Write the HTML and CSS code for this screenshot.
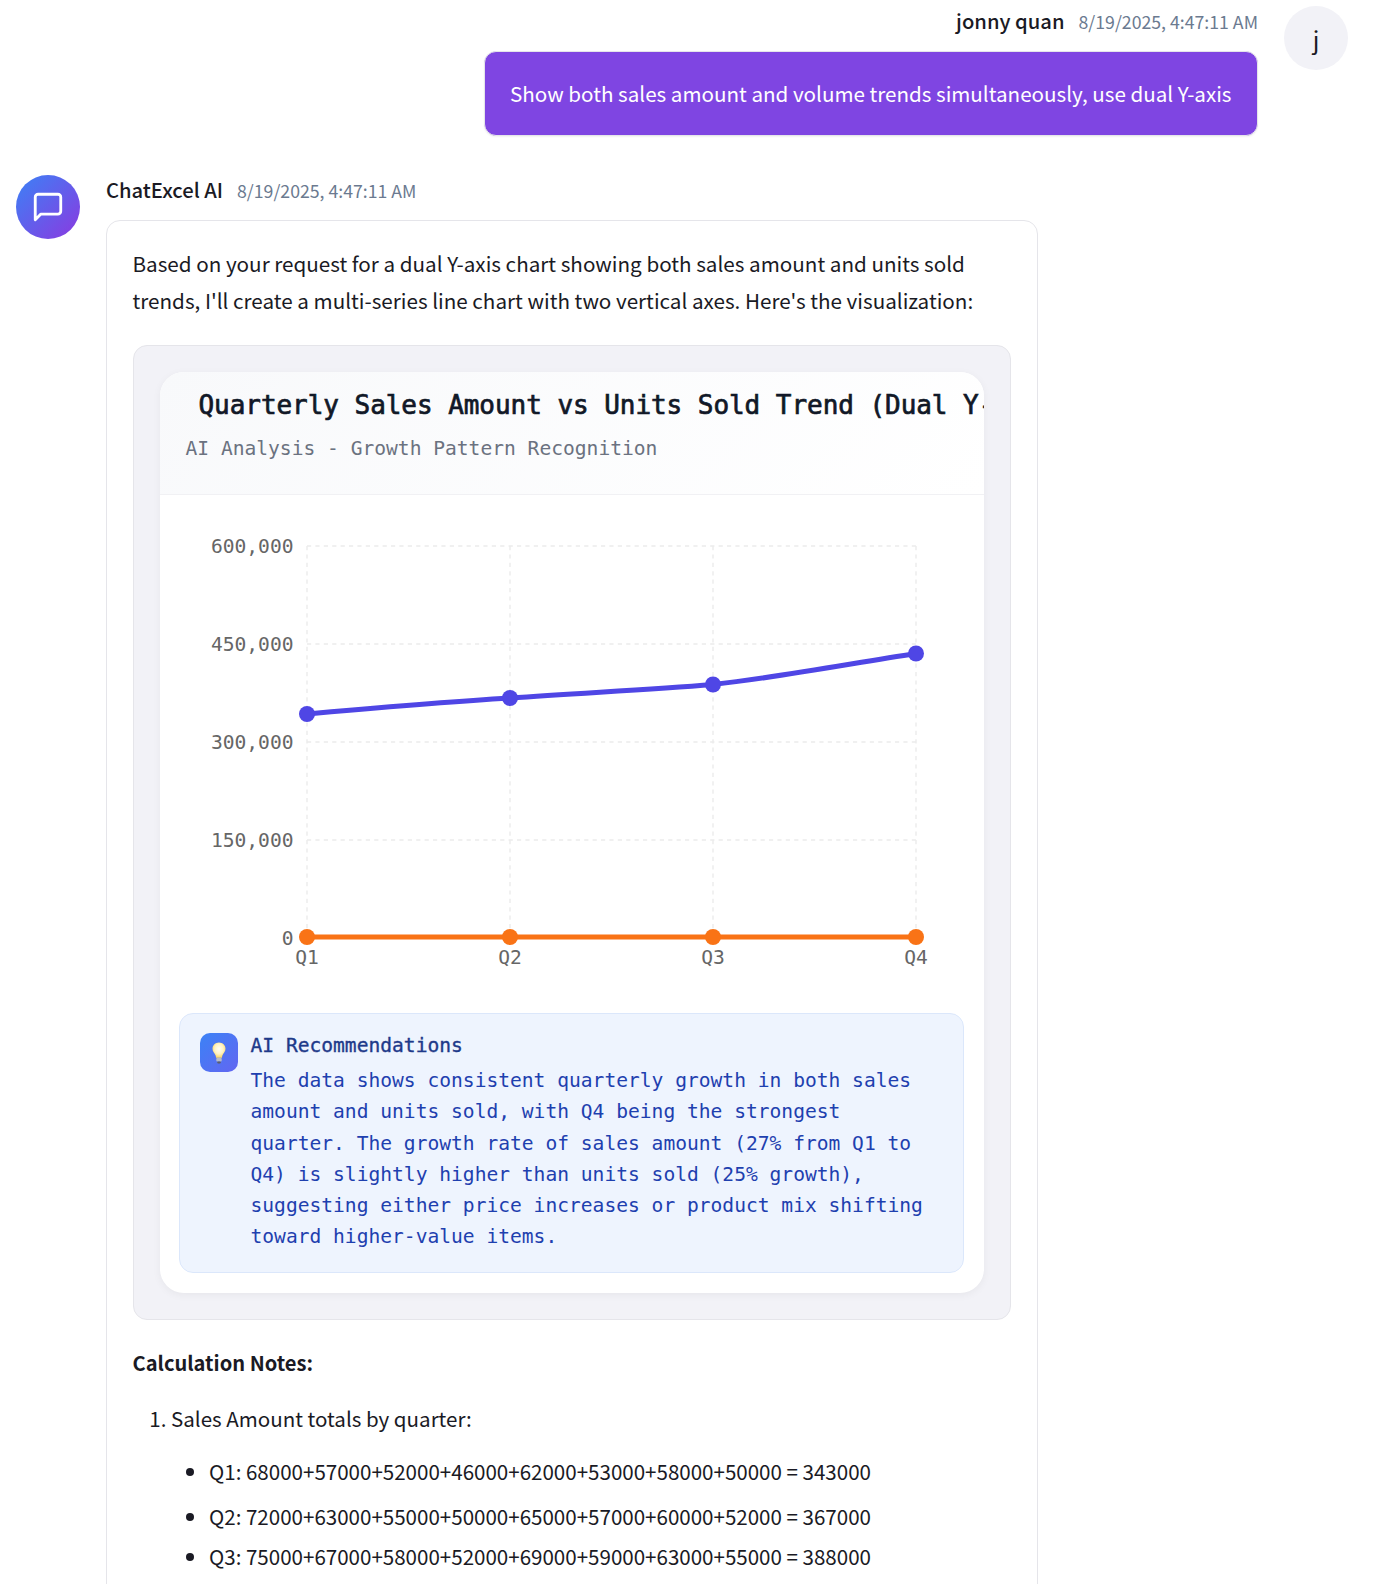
FILE: index.html
```html
<!DOCTYPE html>
<html lang="en">
<head>
    <meta charset="UTF-8">
    <title>ChatExcel AI</title>
    <link rel="stylesheet" href="styles.css">
</head>
<body>
    <div class="msg msg-user">
        <div class="msg-body">
            <div class="msg-head msg-head-right">
                <span class="name">jonny quan</span>
                <span class="time">8/19/2025, 4:47:11 AM</span>
            </div>
            <div class="bubble">Show both sales amount and volume trends simultaneously, use dual Y-axis</div>
        </div>
        <div class="avatar avatar-user">j</div>
    </div>

    <div class="msg msg-ai">
        <div class="avatar avatar-ai">
            <svg width="34" height="34" viewBox="0 0 24 24" fill="none" stroke="#fff" stroke-width="2" stroke-linecap="round" stroke-linejoin="round">
                <path d="M21 15a2 2 0 0 1-2 2H7l-4 4V5a2 2 0 0 1 2-2h14a2 2 0 0 1 2 2z"/>
            </svg>
        </div>
        <div class="msg-body">
            <div class="msg-head">
                <span class="name">ChatExcel AI</span>
                <span class="time">8/19/2025, 4:47:11 AM</span>
            </div>
            <div class="answer">
                <p class="intro">Based on your request for a dual Y-axis chart showing both sales amount and units sold trends, I'll create a multi-series line chart with two vertical axes. Here's the visualization:</p>

                <div class="chart-box">
                    <div class="chart-card">
                        <div class="chart-head">
                            <div class="chart-title">Quarterly Sales Amount vs Units Sold Trend (Dual Y-Axis)</div>
                            <div class="chart-sub">AI Analysis - Growth Pattern Recognition</div>
                        </div>

                        <svg class="chart" viewBox="160 495 824 518" width="824" height="518">
                            <g class="grid">
                                <line x1="307" y1="546" x2="916" y2="546"/>
                                <line x1="307" y1="644" x2="916" y2="644"/>
                                <line x1="307" y1="742" x2="916" y2="742"/>
                                <line x1="307" y1="840" x2="916" y2="840"/>
                                <line x1="307" y1="546" x2="307" y2="937"/>
                                <line x1="510" y1="546" x2="510" y2="937"/>
                                <line x1="713" y1="546" x2="713" y2="937"/>
                                <line x1="916" y1="546" x2="916" y2="937"/>
                            </g>
                            <g class="axis-y">
                                <text x="293.5" y="553">600,000</text>
                                <text x="293.5" y="651">450,000</text>
                                <text x="293.5" y="749">300,000</text>
                                <text x="293.5" y="847">150,000</text>
                                <text x="293.5" y="945">0</text>
                            </g>
                            <g class="axis-x">
                                <text x="307" y="964">Q1</text>
                                <text x="510" y="964">Q2</text>
                                <text x="713" y="964">Q3</text>
                                <text x="916" y="964">Q4</text>
                            </g>
                            <path class="line-blue" d="M307 714 C375 708 442 702 510 698 C578 693 645 690 713 684.500 C781 677 848 664 916 653.500"/>
                            <g class="dots-blue">
                                <circle cx="307" cy="714" r="8"/>
                                <circle cx="510" cy="698" r="8"/>
                                <circle cx="713" cy="684.500" r="8"/>
                                <circle cx="916" cy="653.500" r="8"/>
                            </g>
                            <path class="line-orange" d="M307 937 L916 937"/>
                            <g class="dots-orange">
                                <circle cx="307" cy="937" r="8"/>
                                <circle cx="510" cy="937" r="8"/>
                                <circle cx="713" cy="937" r="8"/>
                                <circle cx="916" cy="937" r="8"/>
                            </g>
                        </svg>

                        <div class="tip">
                            <div class="tip-icon">
                                <svg width="14" height="22" viewBox="0 0 14 22">
                                    <defs>
                                        <radialGradient id="bulb" cx="50%" cy="42%" r="55%">
                                            <stop offset="0" stop-color="#fffef5"/>
                                            <stop offset="0.6" stop-color="#fff3c4"/>
                                            <stop offset="1" stop-color="#fbd96a"/>
                                        </radialGradient>
                                    </defs>
                                    <path d="M7 0.500C3.300 0.500 0.500 3.300 0.500 6.800C0.500 9.700 2.600 11.200 3.500 13.300C3.900 14.200 4 15 4 15.800H10C10 15 10.100 14.200 10.500 13.300C11.400 11.200 13.500 9.700 13.500 6.800C13.500 3.300 10.700 0.500 7 0.500Z" fill="url(#bulb)"/>
                                    <rect x="4.300" y="16" width="5.400" height="3.600" rx="0.800" fill="#b9bcc4"/>
                                    <rect x="5.200" y="19.600" width="3.600" height="1.800" rx="0.800" fill="#5a5f6b"/>
                                </svg>
                            </div>
                            <div class="tip-text">
                                <div class="tip-title">AI Recommendations</div>
                                <div class="tip-body">The data shows consistent quarterly growth in both sales amount and units sold, with Q4 being the strongest quarter. The growth rate of sales amount (27% from Q1 to Q4) is slightly higher than units sold (25% growth), suggesting either price increases or product mix shifting toward higher-value items.</div>
                            </div>
                        </div>
                    </div>
                </div>

                <p class="notes-title">Calculation Notes:</p>
                <ol class="notes">
                    <li>
                        <div class="notes-item">Sales Amount totals by quarter:</div>
                        <ul class="sums">
                            <li>Q1: 68000+57000+52000+46000+62000+53000+58000+50000 = 343000</li>
                            <li class="sum-2">Q2: 72000+63000+55000+50000+65000+57000+60000+52000 = 367000</li>
                            <li class="sum-3">Q3: 75000+67000+58000+52000+69000+59000+63000+55000 = 388000</li>
                        </ul>
                    </li>
                </ol>
            </div>
        </div>
    </div>
</body>
</html>
```

FILE: styles.css
```css
html, body {
    margin: 0;
    height: 1584px;
    overflow: hidden;
}
body {
    background: #fff;
    color: #1a1a24;
    font-family: "Noto Sans CJK SC", "Noto Sans", sans-serif;
    font-size: 20.56px;
    padding-top: 6px;
    box-sizing: border-box;
}
p {
    margin: 0;
}

/* message rows */
.msg {
    display: flex;
}
.msg-user {
    justify-content: flex-end;
    gap: 26px;
    padding-right: 36px;
}
.msg-ai {
    gap: 26px;
    padding-left: 16px;
    margin-top: 39px;
}
.msg-head {
    display: flex;
    align-items: center;
    gap: 14px;
    height: 30px;
    margin-bottom: 15px;
    line-height: 30px;
}
.msg-head-right {
    justify-content: flex-end;
}
.name {
    font-size: 20.2px;
    font-weight: 500;
    color: #1a1a24;
}
.time {
    font-size: 17.7px;
    color: #6b7a90;
}

.avatar {
    width: 64px;
    height: 64px;
    border-radius: 50%;
    flex-shrink: 0;
    display: flex;
    align-items: center;
    justify-content: center;
}
.avatar-user {
    background: #f2f2f7;
    font-size: 24px;
}
.avatar-ai {
    background: linear-gradient(135deg, #3b82f6, #8b39e0);
}

.bubble {
    background: #7f45e2;
    color: #fff;
    font-size: 20.6px;
    border: 1px solid #e5e5ea;
    border-radius: 12px;
    padding: 23px 25.5px;
    line-height: 37px;
    box-shadow: 0 1px 2px rgba(0,0,0,0.06);
}

/* answer card */
.answer {
    width: 932px;
    box-sizing: border-box;
    border: 1px solid #e5e5ea;
    border-radius: 14px 14px 0 0;
    padding: 24px 26.5px 200px 25.5px;
    height: 1400px;
}
.intro {
    font-size: 20.65px;
    line-height: 37px;
}
.chart-box {
    margin-top: 26px;
    background: #f2f2f7;
    border: 1px solid #e5e5ea;
    border-radius: 14px;
    padding: 26px;
}
.chart-card {
    background: #fff;
    border-radius: 24px;
    overflow: hidden;
    box-shadow: 0 2px 8px rgba(0,0,0,0.05);
    font-family: "DejaVu Sans Mono", "Liberation Mono", monospace;
}
.chart-head {
    height: 123px;
    box-sizing: border-box;
    padding: 15px 26px 0;
    background: linear-gradient(135deg, #f8f9fb, #fff);
    border-bottom: 1px solid #f1f1f4;
}
.chart-title {
    font-size: 26px;
    line-height: 36px;
    letter-spacing: -0.05px;
    color: #111827;
    -webkit-text-stroke: 0.7px #111827;
    white-space: nowrap;
    padding-left: 13px;
}
.chart-sub {
    font-size: 19.6px;
    line-height: 28px;
    margin-top: 12px;
    color: #6b7280;
}

.chart {
    display: block;
}
.grid line {
    stroke: #ececec;
    stroke-width: 1.400;
    stroke-dasharray: 4.200 4.200;
}
.axis-y text, .axis-x text {
    font-size: 19.6px;
    fill: #666;
}
.axis-y text {
    text-anchor: end;
}
.axis-x text {
    text-anchor: middle;
}
.line-blue, .line-orange {
    fill: none;
    stroke-width: 5;
}
.line-blue {
    stroke: #4f46e5;
}
.line-orange {
    stroke: #f97316;
}
.dots-blue circle {
    fill: #4f46e5;
}
.dots-orange circle {
    fill: #f97316;
}

.tip {
    display: flex;
    gap: 13px;
    margin: 0 20px 20px 19px;
    padding: 19px 20px;
    background: #eef4fe;
    border: 1px solid #dbe7fb;
    border-radius: 14px;
}
.tip-icon {
    width: 38px;
    height: 39px;
    flex-shrink: 0;
    border-radius: 10px;
    background: linear-gradient(135deg, #3b82f6, #6366f1);
    display: flex;
    align-items: center;
    justify-content: center;
}
.tip-title {
    font-size: 19.6px;
    line-height: 26px;
    color: #1e3a8a;
    -webkit-text-stroke: 0.35px #1e3a8a;
}
.tip-body {
    font-size: 19.6px;
    line-height: 31.3px;
    margin-top: 6px;
    color: #1e40af;
}

/* notes under the chart */
.notes-title {
    margin-top: 24.5px;
    font-size: 20.1px;
    font-weight: 600;
    line-height: 37px;
}
.notes {
    margin: 19px 0 0;
    padding: 0 0 0 38.5px;
}
.notes-item {
    line-height: 37px;
}
.sums {
    margin: 16px 0 0;
    padding: 0 0 0 38px;
    list-style-type: disc;
}
.sums li {
    line-height: 37px;
}
.sums .sum-2 {
    margin-top: 8px;
}
.sums .sum-3 {
    margin-top: 3px;
}
```
